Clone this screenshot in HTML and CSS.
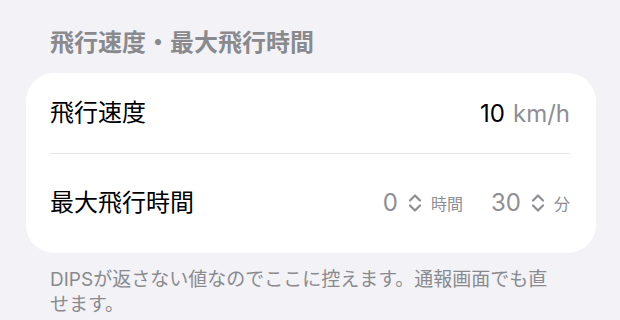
FILE: index.html
```html
<!DOCTYPE html>
<html lang="ja">
<head>
    <meta charset="UTF-8">
    <meta name="viewport" content="width=device-width, initial-scale=1.0">
    <title>飛行速度・最大飛行時間</title>
    <link rel="stylesheet" href="styles.css">
</head>
<body>
    <div class="section">
        <h2 class="section-header">飛行速度・最大飛行時間</h2>

        <div class="card">
            <div class="row row-speed">
                <span class="row-label">飛行速度</span>
                <span class="row-value">
                    <span class="value-main">10</span>
                    <span class="value-unit">km/h</span>
                </span>
            </div>
            <div class="row row-time">
                <span class="row-label">最大飛行時間</span>
                <span class="pickers">
                    <span class="picker">
                        <span class="picker-num">0</span>
                        <svg class="chevrons" viewBox="0 0 14 20" width="14" height="20">
                            <path d="M2 7.5 L7 2.5 L12 7.5 M2 12.5 L7 17.5 L12 12.5"/>
                        </svg>
                        <span class="picker-unit">時間</span>
                    </span>
                    <span class="picker">
                        <span class="picker-num">30</span>
                        <svg class="chevrons" viewBox="0 0 14 20" width="14" height="20">
                            <path d="M2 7.5 L7 2.5 L12 7.5 M2 12.5 L7 17.5 L12 12.5"/>
                        </svg>
                        <span class="picker-unit">分</span>
                    </span>
                </span>
            </div>
        </div>

        <p class="section-footer">DIPSが返さない値なのでここに控えます。通報画面でも直せます。</p>
    </div>
</body>
</html>
```

FILE: styles.css
```css
body {
    margin: 0;
    background: #f2f2f7;
    font-family: Inter, "Noto Sans CJK JP", sans-serif;
    color: #000;
}

.section {
    padding: 0 24px 0 26px;
}

.section-header {
    margin: 0;
    padding: 28px 0 15px 24px;
    font-size: 24px;
    line-height: 30px;
    font-weight: 700;
    color: #8a8a8e;
}

.card {
    background: #fff;
    border-radius: 28px;
    overflow: hidden;
}

.row {
    display: flex;
    align-items: center;
    justify-content: space-between;
    margin: 0 26px 0 24px;
}

.row-speed {
    height: 80px;
    border-bottom: 1.5px solid #e6e6ea;
}

.row-time {
    height: 99px;
    padding-bottom: 2px;
    box-sizing: border-box;
}

.row-label {
    font-size: 24px;
    line-height: 30px;
}

.row-value {
    display: flex;
    align-items: baseline;
    gap: 8px;
    font-size: 24px;
}

.value-unit {
    color: #8e8e93;
}

.pickers {
    display: flex;
    align-items: center;
    gap: 28px;
}

.picker {
    display: flex;
    align-items: center;
}

.picker-num {
    font-size: 24px;
    color: #8e8e93;
}

.chevrons {
    margin: 0 9px 0 10px;
    fill: none;
    stroke: #8e8e93;
    stroke-width: 2.2;
    stroke-linecap: round;
    stroke-linejoin: round;
}

.picker-unit {
    font-size: 16px;
    color: #8e8e93;
}

.section-footer {
    margin: 0;
    padding: 14px 44px 0 24px;
    font-size: 19px;
    line-height: 25px;
    color: #8a8a8e;
}
```
